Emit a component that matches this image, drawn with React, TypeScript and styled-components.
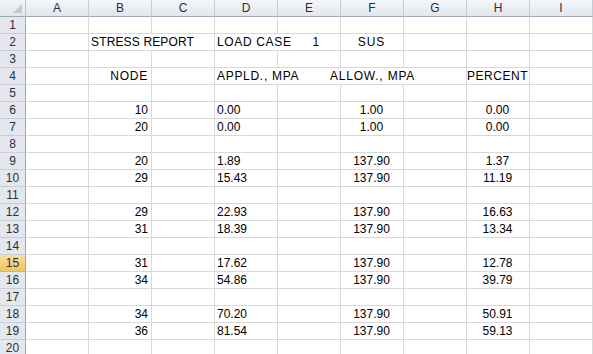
import React from "react";
import styled, { createGlobalStyle, css } from "styled-components";

const Global = createGlobalStyle`
  html, body { margin: 0; padding: 0; background: #ffffff; }
  body { overflow: hidden; }
`;

const COLS = ["A", "B", "C", "D", "E", "F", "G", "H", "I"];
const ROW_COUNT = 20;

const Sheet = styled.div`
  width: 593px;
  height: 354px;
  overflow: hidden;
  display: grid;
  grid-template-columns: 26px repeat(9, 63px);
  grid-auto-rows: 17px;
  font-family: "Liberation Sans", Arial, sans-serif;
  font-size: 12px;
  color: #000;
  background: #fff;
`;

const Corner = styled.div`
  box-sizing: border-box;
  position: relative;
  background: linear-gradient(#f3f5f8, #e2e7ee);
  border-right: 1px solid #b9c2ce;
  border-bottom: 1px solid #9faab8;
  &::after {
    content: "";
    position: absolute;
    right: 3px;
    bottom: 3px;
    width: 0;
    height: 0;
    border-left: 9px solid transparent;
    border-bottom: 9px solid #c2c8d0;
  }
`;

const ColHead = styled.div`
  box-sizing: border-box;
  background: linear-gradient(#f5f7fa, #e1e6ed);
  border-right: 1px solid #c5ccd6;
  border-bottom: 1px solid #9faab8;
  display: flex;
  align-items: center;
  justify-content: center;
  font-size: 12px;
  color: #2b2f36;
  line-height: 16px;
`;

const RowHead = styled.div<{ $active?: boolean }>`
  box-sizing: border-box;
  background: #e4e8ee;
  border-right: 1px solid #9faab8;
  border-bottom: 1px solid #c8ced7;
  display: flex;
  align-items: flex-end;
  justify-content: center;
  font-size: 12px;
  line-height: 16px;
  color: #2b2f36;
  ${(p) =>
    p.$active &&
    css`
      background: linear-gradient(#f9e0a0, #f2c45e);
      border-right: 1px solid #e89a3c;
      border-bottom: 1px solid #e2b457;
    `}
`;

type Align = "left" | "right" | "center";

const Cell = styled.div<{ $align?: Align; $span?: number; $track?: number }>`
  box-sizing: border-box;
  border-right: 1px solid #d9d9d9;
  border-bottom: 1px solid #d9d9d9;
  line-height: 16px;
  height: 17px;
  white-space: pre;
  overflow: hidden;
  grid-column: span ${(p) => p.$span ?? 1};
  text-align: ${(p) => p.$align ?? "left"};
  letter-spacing: ${(p) => p.$track ?? 0}px;
  padding: ${(p) =>
    p.$align === "right" ? "0 3px 0 0" : p.$align === "center" ? "0 1px 0 0" : "0 0 0 2px"};
`;

/* A run of empty cells that text from several cells spills across */
const SpillCell = styled.div<{ $span: number }>`
  box-sizing: border-box;
  grid-column: span ${(p) => p.$span};
  border-right: 1px solid #d9d9d9;
  border-bottom: 1px solid #d9d9d9;
  height: 17px;
  line-height: 16px;
  display: grid;
  grid-template-columns: repeat(${(p) => p.$span}, 63px);
  white-space: pre;
`;

const SpillText = styled.span<{ $col: number; $align?: Align; $track?: number }>`
  grid-column: ${(p) => p.$col};
  grid-row: 1;
  letter-spacing: ${(p) => p.$track ?? 0}px;
  justify-self: ${(p) =>
    p.$align === "center" ? "center" : p.$align === "right" ? "end" : "start"};
  padding-left: ${(p) => (p.$align === "center" || p.$align === "right" ? "0" : "2px")};
`;

const Gap = styled.span`
  display: inline-block;
  margin-left: 21px;
  letter-spacing: 0;
`;

type CellDef = {
  col: number;
  text?: React.ReactNode;
  align?: Align;
  span?: number;
  track?: number;
  spill?: { col: number; text: string; align?: Align; track?: number }[];
};

const T = 0.7;

const data: Record<number, CellDef[]> = {
  2: [
    { col: 1, text: "STRESS REPORT", span: 2, track: 0.15 },
    {
      col: 3,
      text: (
        <>
          LOAD CASE<Gap>1</Gap>
        </>
      ),
      span: 2,
      track: 0.65,
    },
    { col: 5, text: "SUS", align: "center", track: 1 },
  ],
  4: [
    { col: 1, text: "NODE", align: "right", track: 0.75 },
    {
      col: 3,
      span: 4,
      spill: [
        { col: 1, text: "APPLD., MPA", track: T },
        { col: 3, text: "ALLOW., MPA", align: "center", track: 0.8 },
      ],
    },
    { col: 7, text: "PERCENT", align: "center", track: 0.55 },
  ],
};

const rows: [number, string, string, string, string][] = [
  [6, "10", "0.00", "1.00", "0.00"],
  [7, "20", "0.00", "1.00", "0.00"],
  [9, "20", "1.89", "137.90", "1.37"],
  [10, "29", "15.43", "137.90", "11.19"],
  [12, "29", "22.93", "137.90", "16.63"],
  [13, "31", "18.39", "137.90", "13.34"],
  [15, "31", "17.62", "137.90", "12.78"],
  [16, "34", "54.86", "137.90", "39.79"],
  [18, "34", "70.20", "137.90", "50.91"],
  [19, "36", "81.54", "137.90", "59.13"],
];

rows.forEach(([r, node, appld, allow, pct]) => {
  data[r] = [
    { col: 1, text: node, align: "right" },
    { col: 3, text: appld },
    { col: 5, text: allow, align: "center" },
    { col: 7, text: pct, align: "center" },
  ];
});

function renderRow(r: number) {
  const defs = data[r] ?? [];
  const out: React.ReactNode[] = [];
  let c = 0;
  while (c < COLS.length) {
    const d = defs.find((x) => x.col === c);
    if (d && d.spill) {
      out.push(
        <SpillCell key={`${r}-${c}`} $span={d.span ?? 1}>
          {d.spill.map((s) => (
            <SpillText key={s.col} $col={s.col} $align={s.align} $track={s.track}>
              {s.text}
            </SpillText>
          ))}
        </SpillCell>
      );
      c += d.span ?? 1;
    } else if (d) {
      out.push(
        <Cell key={`${r}-${c}`} $align={d.align} $span={d.span} $track={d.track}>
          {d.text}
        </Cell>
      );
      c += d.span ?? 1;
    } else {
      out.push(<Cell key={`${r}-${c}`} />);
      c += 1;
    }
  }
  return out;
}

export default function App() {
  return (
    <>
      <Global />
      <Sheet>
        <Corner />
        {COLS.map((c) => (
          <ColHead key={c}>{c}</ColHead>
        ))}
        {Array.from({ length: ROW_COUNT }, (_, i) => i + 1).map((r) => (
          <React.Fragment key={r}>
            <RowHead $active={r === 15}>{r}</RowHead>
            {renderRow(r)}
          </React.Fragment>
        ))}
      </Sheet>
    </>
  );
}
